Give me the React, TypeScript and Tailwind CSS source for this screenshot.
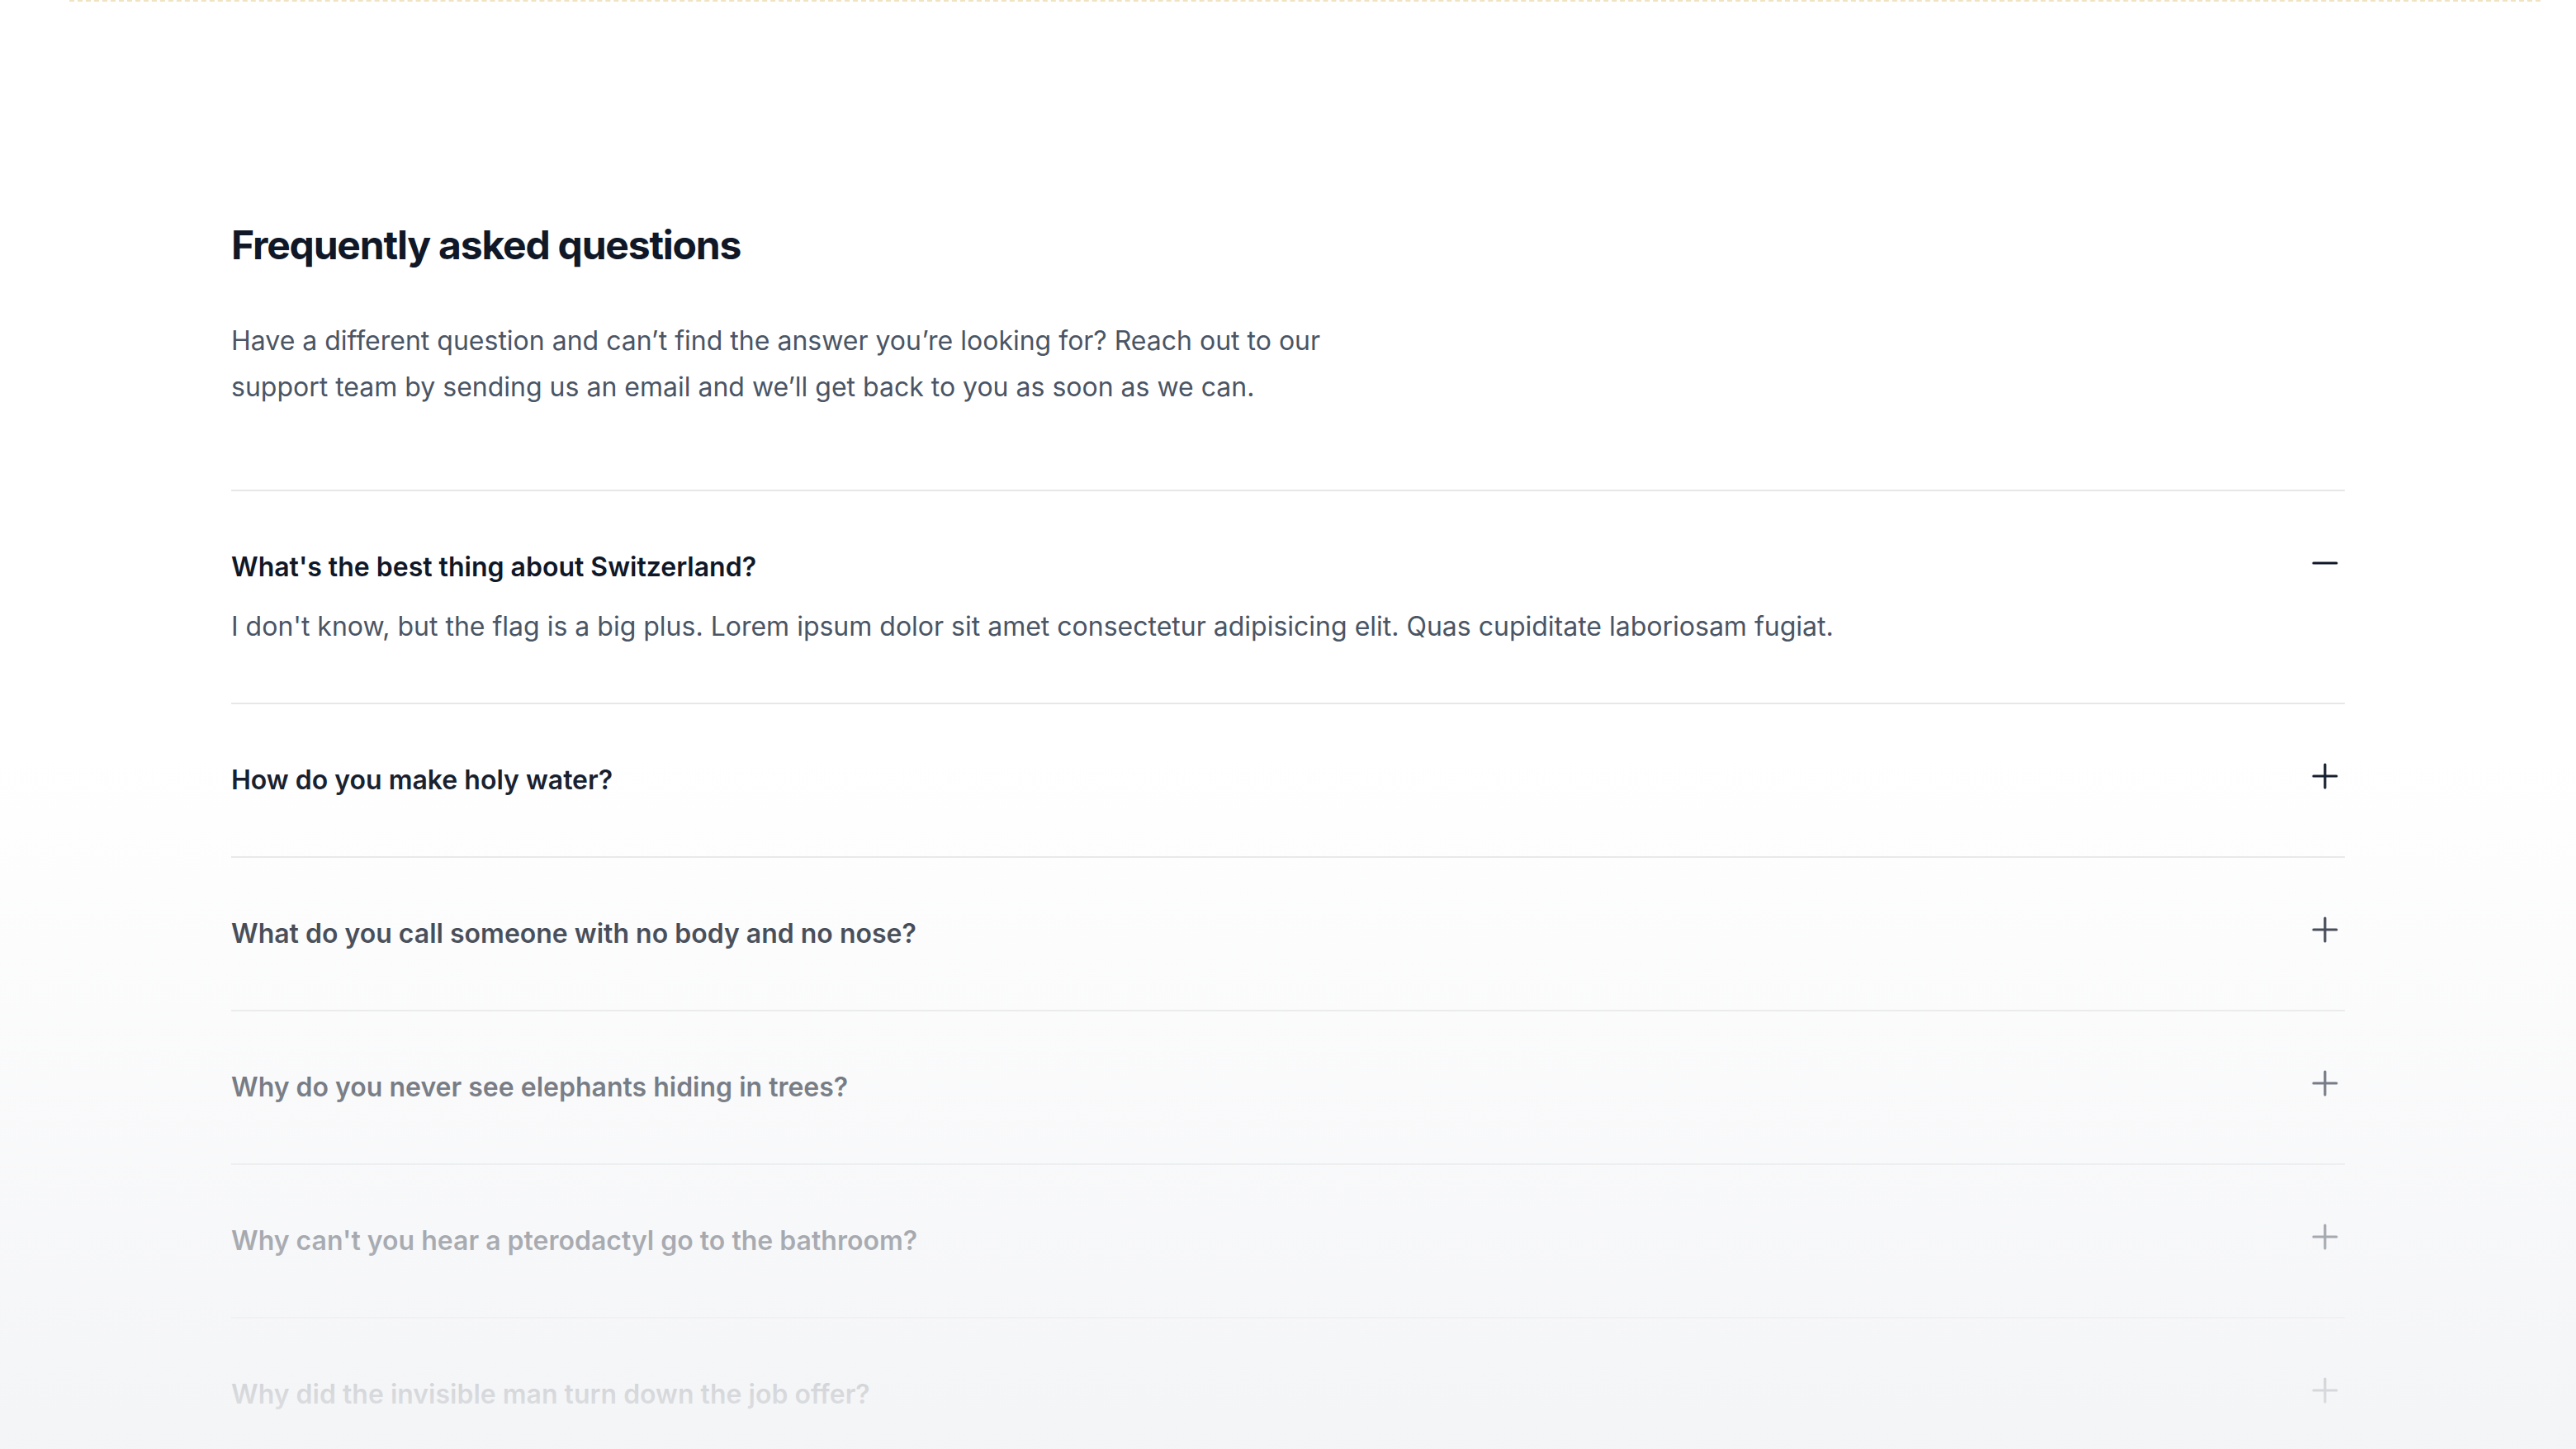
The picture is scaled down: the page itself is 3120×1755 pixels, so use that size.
import React, { useState } from 'react';

interface Faq {
  question: string;
  answer: string;
}

const faqs: Faq[] = [
  {
    question: "What's the best thing about Switzerland?",
    answer:
      "I don't know, but the flag is a big plus. Lorem ipsum dolor sit amet consectetur adipisicing elit. Quas cupiditate laboriosam fugiat.",
  },
  {
    question: 'How do you make holy water?',
    answer:
      'You boil the hell out of it. Lorem ipsum dolor sit amet consectetur adipisicing elit. Magnam aut tempora vitae odio inventore fuga aliquam nostrum quod porro.',
  },
  {
    question: 'What do you call someone with no body and no nose?',
    answer: 'Nobody knows. Lorem ipsum dolor sit amet consectetur adipisicing elit. Culpa, voluptas ipsa quia excepturi.',
  },
  {
    question: 'Why do you never see elephants hiding in trees?',
    answer: "Because they're so good at it. Lorem ipsum dolor sit amet consectetur adipisicing elit.",
  },
  {
    question: "Why can't you hear a pterodactyl go to the bathroom?",
    answer: 'Because the pee is silent. Lorem ipsum dolor sit amet, consectetur adipisicing elit.',
  },
  {
    question: 'Why did the invisible man turn down the job offer?',
    answer: "He couldn't see himself doing it. Lorem ipsum dolor sit amet consectetur adipisicing elit.",
  },
];

const ToggleIcon: React.FC<{ open: boolean }> = ({ open }) => (
  <svg
    viewBox="0 0 24 24"
    fill="none"
    stroke="currentColor"
    strokeWidth={1.5}
    className="h-[48px] w-[48px]"
  >
    {open ? (
      <path strokeLinecap="round" strokeLinejoin="round" d="M19 12H5" />
    ) : (
      <path strokeLinecap="round" strokeLinejoin="round" d="M12 5v14m7-7H5" />
    )}
  </svg>
);

const App: React.FC = () => {
  const [openIndex, setOpenIndex] = useState<number | null>(0);

  return (
    <div
      className="relative h-[1755px] overflow-hidden bg-white"
      style={{ fontFamily: 'Inter, "Noto Sans", sans-serif' }}
    >
      {/* dashed rule along the top edge */}
      <div className="ml-[84px] mr-[43px] border-t-2 border-dashed border-[#efe3c2]" />

      <div className="mx-auto w-[2560px] pt-[255px]">
        {/* Header */}
        <h2 className="text-[48px] font-bold leading-[80px] tracking-tight text-gray-900">
          Frequently asked questions
        </h2>
        <p className="mt-[48px] max-w-[1344px] text-[32px] leading-[56px] text-gray-600">
          Have a different question and can’t find the answer you’re looking for? Reach out to our support team by
          sending us an email and we’ll get back to you as soon as we can.
        </p>

        {/* Accordion */}
        <dl className="mt-[96px] divide-y-2 divide-gray-900/10 border-t-2 border-gray-900/10">
          {faqs.map((faq, i) => {
            const open = openIndex === i;
            return (
              <div key={faq.question} className="py-[64px]">
                <dt>
                  <button
                    onClick={() => setOpenIndex(open ? null : i)}
                    className="flex w-full items-start justify-between text-left text-gray-900"
                  >
                    <span className="text-[32px] font-semibold leading-[56px]">{faq.question}</span>
                    <span className="ml-[48px] flex h-[56px] items-center pb-[10px]">
                      <ToggleIcon open={open} />
                    </span>
                  </button>
                </dt>
                {open && (
                  <dd className="mt-[16px] pr-[96px]">
                    <p className="text-[32px] leading-[56px] text-gray-600">{faq.answer}</p>
                  </dd>
                )}
              </div>
            );
          })}
        </dl>
      </div>

      {/* Fade over the lower rows */}
      <div className="pointer-events-none absolute inset-x-0 bottom-0 top-[910px] bg-linear-to-b from-white/0 to-[#f3f4f6]/95" />
    </div>
  );
};

export default App;
